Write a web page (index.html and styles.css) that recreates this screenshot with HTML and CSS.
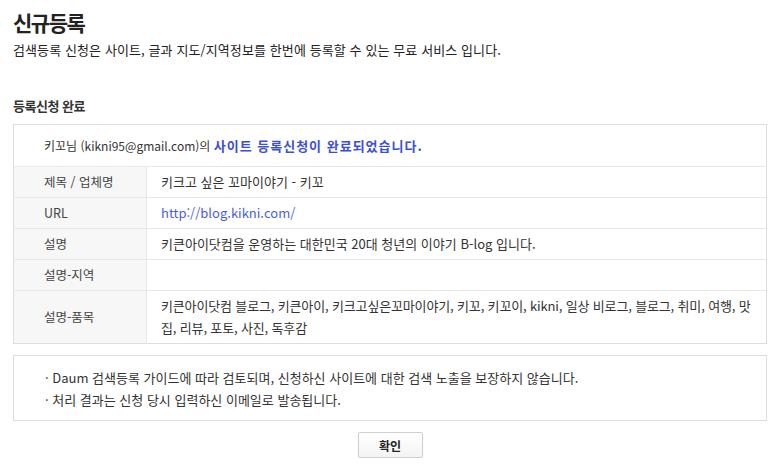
FILE: index.html
```html
<!DOCTYPE html>
<html lang="ko">
<head>
<meta charset="utf-8">
<title>신규등록</title>
<link rel="stylesheet" href="styles.css">
</head>
<body>
<div class="page">
  <h1 class="title">신규등록</h1>
  <p class="subtitle">검색등록 신청은 사이트, 글과 지도/지역정보를 한번에 등록할 수 있는 무료 서비스 입니다.</p>
  <h2 class="section">등록신청 완료</h2>
  <table class="info">
    <colgroup>
      <col class="col-label">
      <col class="col-value">
    </colgroup>
    <tr class="head">
      <td colspan="2">키꼬님 (kikni95@gmail.com)의 <strong class="done">사이트 등록신청이 완료되었습니다.</strong></td>
    </tr>
    <tr>
      <th>제목 / 업체명</th>
      <td>키크고 싶은 꼬마이야기 - 키꼬</td>
    </tr>
    <tr>
      <th>URL</th>
      <td><a class="link" href="#">http://blog.kikni.com/</a></td>
    </tr>
    <tr>
      <th>설명</th>
      <td>키큰아이닷컴을 운영하는 대한민국 20대 청년의 이야기 B-log 입니다.</td>
    </tr>
    <tr>
      <th>설명-지역</th>
      <td></td>
    </tr>
    <tr class="multi">
      <th>설명-품목</th>
      <td>키큰아이닷컴 블로그, 키큰아이, 키크고싶은꼬마이야기, 키꼬, 키꼬이, kikni, 일상 비로그, 블로그, 취미, 여행, 맛집, 리뷰, 포토, 사진, 독후감</td>
    </tr>
  </table>
  <div class="notice">
    <p>· Daum 검색등록 가이드에 따라 검토되며, 신청하신 사이트에 대한 검색 노출을 보장하지 않습니다.</p>
    <p>· 처리 결과는 신청 당시 입력하신 이메일로 발송됩니다.</p>
  </div>
  <div class="actions">
    <button class="btn" type="button">확인</button>
  </div>
</div>
</body>
</html>
```
FILE: styles.css
```css
* { box-sizing: border-box; }
html, body {
  margin: 0;
  padding: 0;
  background: #fff;
}
body {
  font-family: "Noto Sans CJK KR", "Noto Sans", sans-serif;
  color: #333;
  font-size: 12px;
}
.page {
  padding: 8px 8px 0 13px;
  width: 775px;
}
.title {
  margin: 0;
  font-size: 21px;
  line-height: 28px;
  font-weight: bold;
  color: #222;
  letter-spacing: -1.5px;
}
.subtitle {
  margin: 5px 0 0;
  font-size: 13px;
  line-height: 18px;
  color: #222;
  letter-spacing: 0.1px;
}
.section {
  margin: 38px 0 0;
  font-size: 13px;
  line-height: 18px;
  font-weight: bold;
  color: #333;
  letter-spacing: -0.5px;
}
.info {
  margin-top: 9px;
  width: 754px;
  border-collapse: collapse;
  border: 1px solid #ddd;
  table-layout: fixed;
}
.col-label { width: 133px; }
.info th, .info td {
  border-top: 1px solid #e8e8e8;
  height: 31px;
  padding: 0;
  font-size: 13px;
  line-height: 22px;
  vertical-align: middle;
  text-align: left;
}
.info th {
  background: #f7f7f7;
  font-weight: normal;
  font-size: 12.5px;
  color: #444;
  padding-left: 30px;
  border-right: 1px solid #e8e8e8;
}
.info td {
  padding-left: 14px;
  padding-right: 4px;
  color: #333;
}
.info .head td {
  height: 42px;
  border-top: none;
  padding-left: 30px;
  font-size: 12px;
}
.done {
  color: #3b4fd6;
  font-weight: bold;
  font-size: 13px;
  letter-spacing: 1px;
}
.link {
  color: #4a5fdb;
  text-decoration: none;
}
.info .multi th, .info .multi td {
  height: 53px;
}
.info .multi td {
  letter-spacing: -0.15px;
}
.notice {
  margin-top: 11px;
  width: 754px;
  border: 1px solid #ddd;
  padding: 11px 0 9px 31px;
}
.notice p {
  margin: 0;
  font-size: 13px;
  line-height: 22px;
  color: #333;
}
.actions {
  display: flex;
  justify-content: center;
  width: 754px;
  margin-top: 11px;
}
.btn {
  width: 65px;
  height: 26px;
  border: 1px solid #cfcfcf;
  border-radius: 2px;
  background: linear-gradient(#fff, #f3f3f3);
  box-shadow: 0 1px 1px rgba(0,0,0,0.12);
  font-family: "Noto Sans CJK KR", sans-serif;
  font-size: 12px;
  font-weight: bold;
  color: #222;
  padding: 0;
}
```
